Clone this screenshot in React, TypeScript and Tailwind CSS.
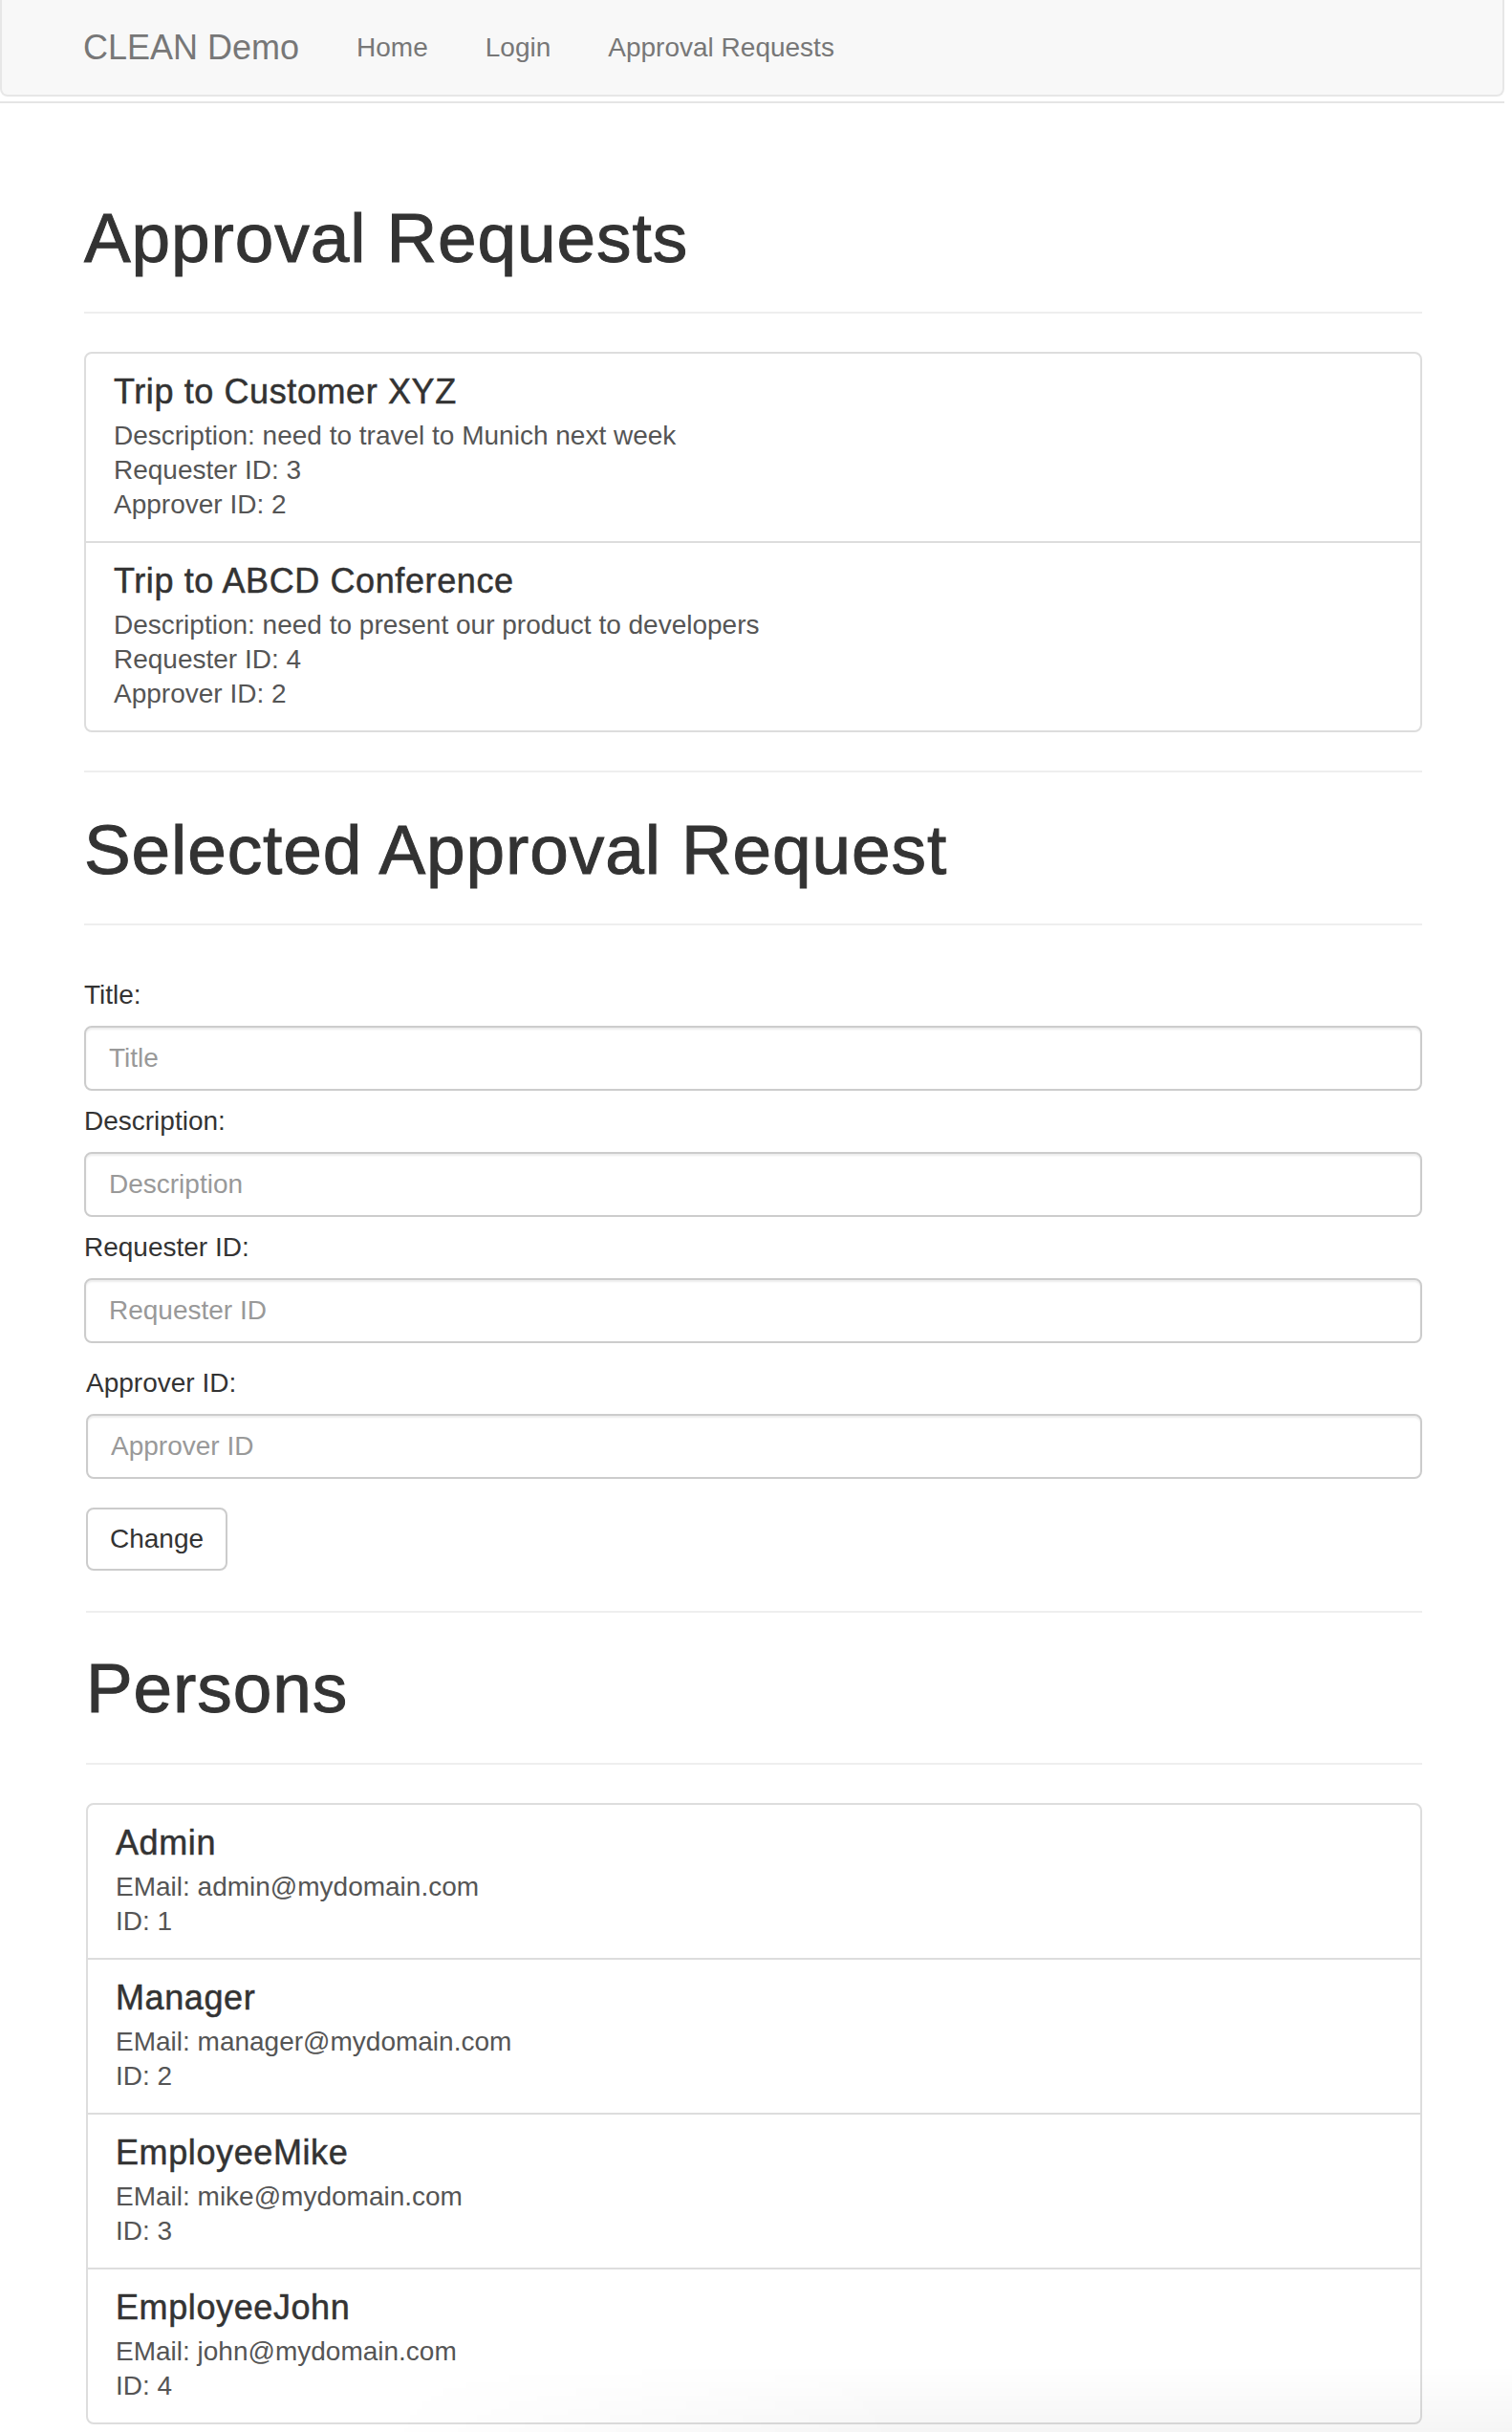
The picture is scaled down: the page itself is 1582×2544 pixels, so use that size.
import React from "react";

type Req = { title: string; lines: string[] };

const requests: Req[] = [
  {
    title: "Trip to Customer XYZ",
    lines: ["Description: need to travel to Munich next week", "Requester ID: 3", "Approver ID: 2"],
  },
  {
    title: "Trip to ABCD Conference",
    lines: ["Description: need to present our product to developers", "Requester ID: 4", "Approver ID: 2"],
  },
];

const persons: Req[] = [
  { title: "Admin", lines: ["EMail: admin@mydomain.com", "ID: 1"] },
  { title: "Manager", lines: ["EMail: manager@mydomain.com", "ID: 2"] },
  { title: "EmployeeMike", lines: ["EMail: mike@mydomain.com", "ID: 3"] },
  { title: "EmployeeJohn", lines: ["EMail: john@mydomain.com", "ID: 4"] },
];

function ListGroup({ items }: { items: Req[] }) {
  return (
    <div className="border-2 border-[#dddddd] rounded-[8px] bg-white">
      {items.map((it, i) => (
        <div
          key={it.title}
          className={
            "pl-[29px] pr-[30px] pt-[20px] pb-[20px] " + (i > 0 ? "border-t-2 border-[#dddddd]" : "")
          }
        >
          <h4 className="text-[36px] leading-[40px] text-[#333333] mb-[8px] tracking-[0.6px] [-webkit-text-stroke:0.5px_#333333]">
            {it.title}
          </h4>
          {it.lines.map((l) => (
            <div key={l} className="text-[28px] leading-[36px] text-[#555555]">
              {l}
            </div>
          ))}
        </div>
      ))}
    </div>
  );
}

function Field({ label, placeholder, className = "" }: { label: string; placeholder: string; className?: string }) {
  return (
    <div className={className}>
      <label className="block text-[28px] leading-[40px] text-[#333333]">{label}</label>
      <input
        placeholder={placeholder}
        className="mt-[12px] block w-full h-[68px] border-2 border-[#cccccc] rounded-[8px] px-[24px] text-[28px] text-[#555555] placeholder:text-[#999999] shadow-[inset_0_2px_2px_rgba(0,0,0,0.075)] outline-none bg-white"
      />
    </div>
  );
}

function PageHeader({ children, className = "" }: { children: React.ReactNode; className?: string }) {
  return (
    <h1
      className={
        "text-[73px] leading-[80px] tracking-[0.9px] pb-[37px] border-b-2 border-[#eeeeee] [-webkit-text-stroke:1px_#333333] " +
        className
      }
    >
      {children}
    </h1>
  );
}

export default function App() {
  return (
    <div className="relative w-full min-h-[2544px] bg-white text-[#333333] font-['Liberation_Sans','Helvetica_Neue',Arial,sans-serif] overflow-hidden">
      <nav className="mr-[8px] h-[101px] bg-[#f8f8f8] border-2 border-t-0 border-[#e7e7e7] rounded-b-[8px] flex items-center pl-[85px]">
        <span className="text-[36px] leading-[40px] text-[#777777] mr-[30px]">CLEAN Demo</span>
        <ul className="flex">
          {["Home", "Login", "Approval Requests"].map((n) => (
            <li key={n} className="px-[30px] text-[28px] leading-[40px] text-[#777777]">
              {n}
            </li>
          ))}
        </ul>
      </nav>
      <div className="mr-[8px] mt-[5px] h-[2px] bg-[#e5e5e5]" />

      <main className="ml-[88px] w-[1400px]">
        <PageHeader className="mt-[101px]">Approval Requests</PageHeader>
        <div className="mt-[40px]">
          <ListGroup items={requests} />
        </div>

        <div className="mt-[40px] h-[2px] bg-[#eeeeee]" />
        <PageHeader className="mt-[41px]">Selected Approval Request</PageHeader>

        <form className="mt-[53px]" onSubmit={(e) => e.preventDefault()}>
          <Field label="Title:" placeholder="Title" />
          <Field label="Description:" placeholder="Description" className="mt-[12px]" />
          <Field label="Requester ID:" placeholder="Requester ID" className="mt-[12px]" />
          <div className="ml-[2px]">
            <Field label="Approver ID:" placeholder="Approver ID" className="mt-[22px]" />
            <button
              type="submit"
              className="mt-[30px] h-[66px] px-[23px] border-2 border-[#cccccc] rounded-[8px] bg-white text-[28px] text-[#333333]"
            >
              Change
            </button>
          </div>
        </form>

        <div className="ml-[2px]">
          <div className="mt-[42px] h-[2px] bg-[#eeeeee]" />
          <PageHeader className="mt-[39px] pb-[38px]">Persons</PageHeader>
          <div className="mt-[40px]">
            <ListGroup items={persons} />
          </div>
        </div>
      </main>

      <div className="pointer-events-none absolute bottom-0 left-0 right-0 h-[70px] bg-[linear-gradient(to_bottom,rgba(0,0,0,0),rgba(0,0,0,0.04))] [mask-image:linear-gradient(to_right,transparent_25%,black_60%)]" />
    </div>
  );
}
